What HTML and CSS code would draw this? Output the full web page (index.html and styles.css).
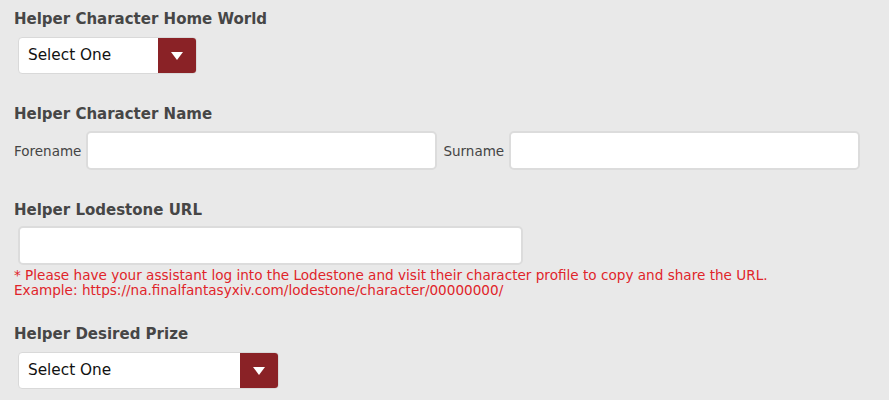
FILE: index.html
```html
<!DOCTYPE html>
<html>
<head>
<meta charset="utf-8">
<link rel="stylesheet" href="styles.css">
</head>
<body>
<form class="form">
  <section class="field">
    <h3 class="label">Helper Character Home World</h3>
    <div class="select select-world">
      <span class="select-text">Select One</span>
      <span class="select-btn"><svg width="12" height="8" viewBox="0 0 12 8"><path d="M0 0H12L6 8Z" fill="#fff"/></svg></span>
    </div>
  </section>
  <section class="field">
    <h3 class="label">Helper Character Name</h3>
    <div class="name-row">
      <span class="sub">Forename</span><span class="input name-input"></span>
      <span class="sub">Surname</span><span class="input name-input"></span>
    </div>
  </section>
  <section class="field field-url">
    <h3 class="label">Helper Lodestone URL</h3>
    <span class="input url-input"></span>
    <p class="note">* Please have your assistant log into the Lodestone and visit their character profile to copy and share the URL.<br>Example: https://na.finalfantasyxiv.com/lodestone/character/00000000/</p>
  </section>
  <section class="field">
    <h3 class="label">Helper Desired Prize</h3>
    <div class="select select-prize">
      <span class="select-text">Select One</span>
      <span class="select-btn"><svg width="12" height="8" viewBox="0 0 12 8"><path d="M0 0H12L6 8Z" fill="#fff"/></svg></span>
    </div>
  </section>
</form>
</body>
</html>
```
FILE: styles.css
```css
html, body { margin: 0; padding: 0; }
body {
  background: #e9e9e9;
  font-family: "DejaVu Sans", Verdana, sans-serif;
  color: #444;
  width: 889px;
  height: 400px;
  overflow: hidden;
}
.form { padding: 9px 0 0 14px; }
.field { margin-bottom: 30px; }
.field-url { margin-bottom: 26px; }
.label {
  margin: 0;
  font-size: 15px;
  font-weight: bold;
  color: #464646;
  line-height: 20px;
}
.select {
  margin: 8px 0 0 4px;
  display: flex;
  height: 37px;
  box-sizing: border-box;
  border: 1px solid #d9d9d9;
  border-radius: 4px;
  background: #fff;
  overflow: hidden;
}
.select-world { width: 179px; }
.select-prize { width: 261px; }
.select-text {
  flex: 1;
  padding-left: 9px;
  font-size: 15.3px;
  line-height: 35px;
  color: #111;
}
.select-btn {
  width: 38px;
  background: #8a2226;
  display: flex;
  align-items: center;
  justify-content: center;
}
.name-row {
  margin-top: 7px;
  display: flex;
  align-items: center;
}
.sub { font-size: 13.5px; color: #444; margin-right: 5px; }
.input {
  display: block;
  box-sizing: border-box;
  height: 39px;
  background: #fff;
  border: 2px solid #dcdcdc;
  border-radius: 5px;
}
.name-input { width: 351px; margin-right: 6px; }
.url-input { width: 505px; margin: 6px 0 0 4px; }
.note {
  margin: 3px 0 0;
  font-size: 13.6px;
  line-height: 15px;
  color: #e0242a;
}
```
